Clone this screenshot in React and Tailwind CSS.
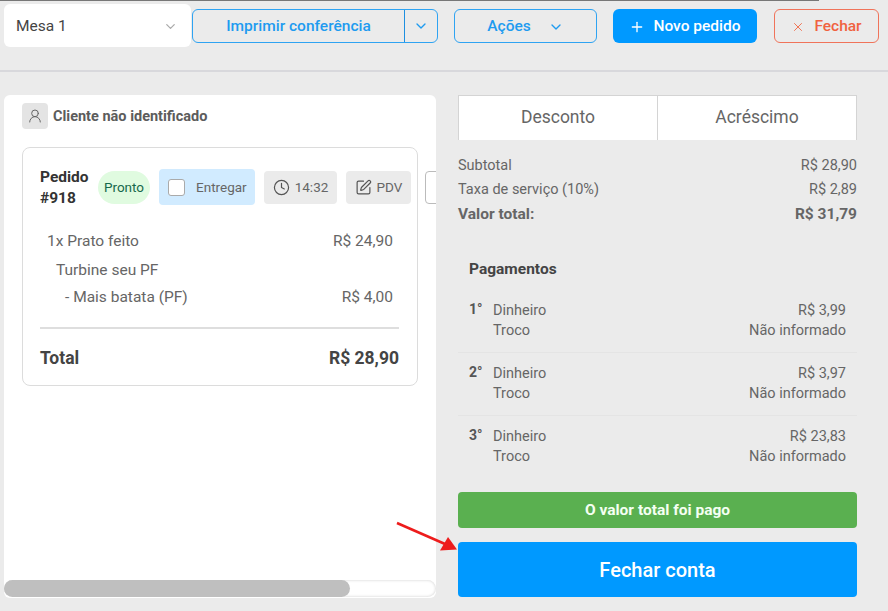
import { ChevronDown, Plus, X, UserRound, Clock, SquarePen } from "lucide-react";

const pagamentos = [
  { ordem: "1°", valor: "R$ 3,99" },
  { ordem: "2°", valor: "R$ 3,97" },
  { ordem: "3°", valor: "R$ 23,83" },
];

function Pagamento({ ordem, valor, last }) {
  return (
    <div className={`flex h-[63px] pl-[11px] pr-[11px] pt-[11px] text-[14.5px] leading-[20px] text-[#666] ${last ? "" : "border-b border-[#e4e4e4]"}`}>
      <span className="w-[24px] text-[14px] font-bold leading-[16px] text-[#555]">{ordem}</span>
      <div className="flex-1">
        <div className="flex justify-between">
          <span>Dinheiro</span>
          <span>{valor}</span>
        </div>
        <div className="flex justify-between">
          <span>Troco</span>
          <span>Não informado</span>
        </div>
      </div>
    </div>
  );
}

export default function App() {
  return (
    <div className="relative h-[611px] w-[888px] overflow-hidden bg-[#ebebeb] font-['Roboto',sans-serif]">
      <div className="h-px w-[819px] bg-[#777]" />

      {/* HEADER */}
      <div className="flex h-[71px] items-start border-b-2 border-[#d8d8dc] pl-1 pt-[3px]">
        <div className="flex h-[43px] w-[187px] items-center justify-between rounded-md bg-white pl-3 pr-[13px] pt-[2px] text-[15.5px] text-[#444]">
          <span>Mesa 1</span>
          <ChevronDown size={15} className="text-[#aaa]" />
        </div>
        <div className="ml-px mt-[5px] flex h-[34px] w-[246px] rounded-md border border-[#2ea3f2] text-[#1e9bf0]">
          <div className="flex w-[212px] items-center justify-center border-r border-[#1e8fe0] pt-px text-[15.5px] font-medium">Imprimir conferência</div>
          <div className="flex flex-1 items-center justify-center">
            <ChevronDown size={16} />
          </div>
        </div>
        <div className="ml-4 mt-[5px] flex h-[34px] w-[143px] items-center justify-center gap-[17px] rounded-md border border-[#2ea3f2] pt-px text-[15.5px] font-medium text-[#1e9bf0]">
          <span>Ações</span>
          <ChevronDown size={16} />
        </div>
        <div className="ml-4 mt-[5px] flex h-[34px] w-[144px] items-center justify-center gap-2 rounded-md bg-[#0099ff] pt-px text-[15.5px] font-medium text-white">
          <Plus size={16} />
          <span>Novo pedido</span>
        </div>
        <div className="ml-[17px] mt-[5px] flex h-[34px] w-[105px] items-center justify-center gap-[9px] rounded-md border border-[#f0735a] pt-px text-[15.5px] font-medium text-[#f0623f]">
          <X size={14} strokeWidth={1.5} />
          <span>Fechar</span>
        </div>
      </div>

      {/* CONTEUDO */}
      <div className="flex pl-1 pt-[23px]">
        {/* COLUNA ESQUERDA */}
        <div className="flex h-[503px] w-[432px] flex-col overflow-hidden rounded-md bg-white">
          <div className="flex-1 pl-[18px] pt-2">
            <div className="flex items-center gap-[5px]">
              <div className="flex size-[26px] items-center justify-center rounded bg-[#e4e4e4] text-[#666]">
                <UserRound size={16} strokeWidth={1.5} />
              </div>
              <span className="pt-[2px] text-[14.5px] font-bold text-[#5c5c5c]">Cliente não identificado</span>
            </div>

            <div className="mt-[18px] h-[239px] w-[396px] rounded-lg border border-[#dcdcdc]">
              <div className="flex items-start pl-[17px] pt-[19px]">
                <div className="w-[58px] shrink-0 text-[15.5px] font-bold leading-[21px] text-[#333]">
                  Pedido
                  <br />
                  #918
                </div>
                <div className="mt-[2px] flex items-center">
                  <div className="flex h-[33px] w-[52px] shrink-0 items-center justify-center rounded-full bg-[#e0fbe0] text-[13.5px] text-[#17694c]">Pronto</div>
                  <div className="ml-[9px] flex h-[36px] w-[96px] shrink-0 items-center rounded-sm bg-[#d1ebff] pl-[9px] text-[13.5px] text-[#666]">
                    <div className="size-[17px] rounded-[3px] border border-[#aaa] bg-white" />
                    <span className="ml-[11px]">Entregar</span>
                  </div>
                  <div className="ml-[9px] flex h-[33px] w-[73px] shrink-0 items-center justify-center gap-[5px] rounded bg-[#ebebeb] text-[13.5px] text-[#666]">
                    <Clock size={17} strokeWidth={1.7} className="text-[#555]" />
                    <span>14:32</span>
                  </div>
                  <div className="ml-[9px] flex h-[33px] w-[65px] shrink-0 items-center justify-center gap-[5px] rounded bg-[#ebebeb] text-[13.5px] text-[#666]">
                    <SquarePen size={17} strokeWidth={1.7} className="text-[#555]" />
                    <span>PDV</span>
                  </div>
                  <div className="ml-[14px] h-[33px] w-[40px] shrink-0 rounded border border-[#bbb] bg-white" />
                </div>
              </div>

              <div className="pl-[17px] pr-[18px] pt-[22px] text-[15.5px] text-[#666]">
                <div className="flex justify-between pl-[7px] pr-[6px] leading-[20px]">
                  <span>1x Prato feito</span>
                  <span>R$ 24,90</span>
                </div>
                <div className="mt-[9px] pl-4 leading-[20px]">Turbine seu PF</div>
                <div className="mt-[7px] flex justify-between pl-[25px] pr-[6px] leading-[20px]">
                  <span>- Mais batata (PF)</span>
                  <span>R$ 4,00</span>
                </div>
                <div className="mt-5 h-[2px] bg-[#dedede]" />
                <div className="mt-[18px] flex justify-between text-[17.5px] font-bold leading-[22px] text-[#444]">
                  <span>Total</span>
                  <span>R$ 28,90</span>
                </div>
              </div>
            </div>
          </div>

          {/* SCROLL */}
          <div className="mb-px h-[17px] shrink-0 rounded-full bg-white shadow-[inset_0_0_3px_#ccc]">
            <div className="h-full w-[346px] rounded-full bg-[#bfbfbf]" />
          </div>
        </div>

        {/* COLUNA DIREITA */}
        <div className="ml-[22px] w-[399px]">
          <div className="flex h-[45px] border-x border-t border-[#d4d4d4] bg-white text-[17.5px] text-[#666]">
            <div className="flex w-[199px] items-center justify-center border-r border-[#d4d4d4] pb-px">Desconto</div>
            <div className="flex flex-1 items-center justify-center pb-px">Acréscimo</div>
          </div>

          <div className="mt-[14px] text-[14.5px] text-[#666]">
            <div className="flex h-[24px] items-center justify-between">
              <span>Subtotal</span>
              <span>R$ 28,90</span>
            </div>
            <div className="flex h-[24px] items-center justify-between">
              <span>Taxa de serviço (10%)</span>
              <span>R$ 2,89</span>
            </div>
            <div className="mt-px flex h-[24px] items-center justify-between text-[15.5px] font-bold">
              <span>Valor total:</span>
              <span>R$ 31,79</span>
            </div>
          </div>

          <div className="mt-[32px] pl-[11px] text-[15.5px] font-bold leading-[20px] text-[#444]">Pagamentos</div>
          <div className="mt-[11px]">
            {pagamentos.map((p, i) => (
              <Pagamento key={p.ordem} ordem={p.ordem} valor={p.valor} last={i === pagamentos.length - 1} />
            ))}
          </div>

          <div className="mt-[13px] flex h-[36px] items-center justify-center rounded bg-[#5ab050] pt-[2px] text-[15.5px] font-bold text-[#f4fff2]">O valor total foi pago</div>
          <div className="mt-[14px] flex h-[55px] items-center justify-center rounded bg-[#0099ff] text-[20px] font-medium text-white">Fechar conta</div>
        </div>
      </div>

      {/* SETA */}
      <svg className="absolute left-[395px] top-[520px]" width="66" height="34" viewBox="0 0 66 34">
        <path d="M2 3 L50 24" stroke="#ed1c1c" strokeWidth="2.5" fill="none" />
        <path d="M62 29.5 L45 30.5 L53 17 Z" fill="#ed1c1c" />
      </svg>
    </div>
  );
}
